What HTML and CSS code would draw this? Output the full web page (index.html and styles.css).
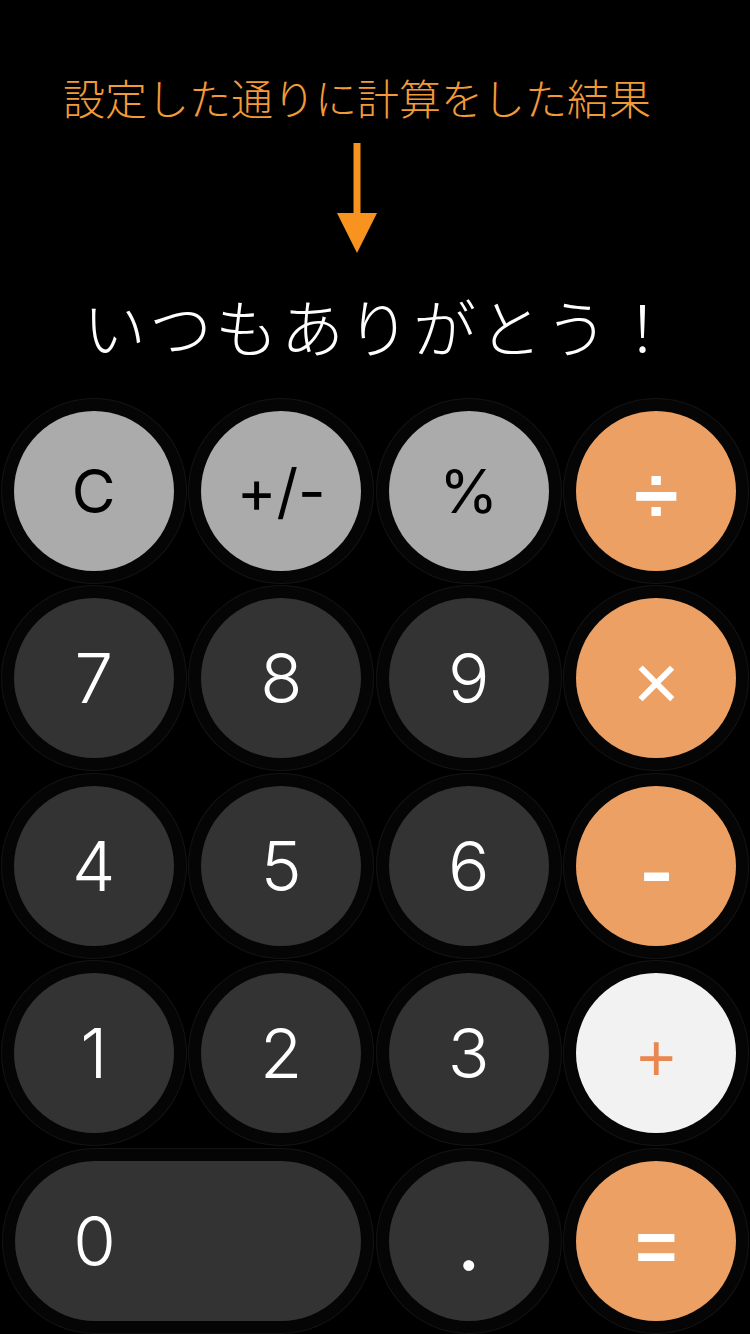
FILE: index.html
```html
<!DOCTYPE html>
<html lang="ja">
<head>
<meta charset="utf-8">
<title>Calculator</title>
<link rel="stylesheet" href="styles.css">
</head>
<body>
<div class="screen">
  <header class="annot">
    <p class="annot-text">設定した通りに計算をした結果</p>
    <svg class="arrow" width="40" height="110" viewBox="0 0 40 110">
      <rect x="16.5" y="0" width="7" height="72" fill="#f7931e"/>
      <polygon points="0,70 40,70 20,110" fill="#f7931e"/>
    </svg>
  </header>
  <div class="display">いつもありがとう！</div>
  <div class="keys">
    <div class="cell"><div class="btn fn">C</div></div>
    <div class="cell"><div class="btn fn">+/-</div></div>
    <div class="cell"><div class="btn fn">%</div></div>
    <div class="cell"><div class="btn op"><span class="sym div">÷</span></div></div>

    <div class="cell"><div class="btn num">7</div></div>
    <div class="cell"><div class="btn num">8</div></div>
    <div class="cell"><div class="btn num">9</div></div>
    <div class="cell"><div class="btn op"><span class="sym mul">×</span></div></div>

    <div class="cell"><div class="btn num">4</div></div>
    <div class="cell"><div class="btn num">5</div></div>
    <div class="cell"><div class="btn num">6</div></div>
    <div class="cell"><div class="btn op"><span class="sym sub">-</span></div></div>

    <div class="cell"><div class="btn num">1</div></div>
    <div class="cell"><div class="btn num">2</div></div>
    <div class="cell"><div class="btn num">3</div></div>
    <div class="cell"><div class="btn op active"><span class="sym add">+</span></div></div>

    <div class="cell wide"><div class="btn num zero"><span class="zero-label">0</span></div></div>
    <div class="cell"><div class="btn num"><span class="dot">.</span></div></div>
    <div class="cell"><div class="btn op"><span class="sym eq">=</span></div></div>
  </div>
</div>
</body>
</html>
```
FILE: styles.css
```css
html, body {
  margin: 0;
  padding: 0;
  background: #000;
}
body {
  width: 750px;
  height: 1334px;
  overflow: hidden;
  font-family: "Inter", "Noto Sans CJK JP", sans-serif;
}
.screen {
  display: flex;
  flex-direction: column;
}
.annot {
  width: 714px;
  display: flex;
  flex-direction: column;
  align-items: center;
  padding-top: 76px;
}
.annot-text {
  margin: 0;
  font-family: "Noto Sans CJK JP", sans-serif;
  font-weight: 300;
  font-size: 42px;
  line-height: 42px;
  color: #f39a38;
  white-space: nowrap;
}
.arrow {
  display: block;
  margin-top: 25px;
}
.display {
  margin-top: 29px;
  height: 84px;
  display: flex;
  align-items: center;
  justify-content: center;
  font-family: "Noto Sans CJK JP", sans-serif;
  font-weight: 300;
  font-size: 63px;
  letter-spacing: 3px;
  color: #fff;
  padding-left: 10px;
}
.keys {
  display: grid;
  grid-template-columns: repeat(4, 187.5px);
  grid-auto-rows: 187.5px;
  margin-top: 31px;
}
.cell {
  display: flex;
  align-items: center;
  justify-content: center;
}
.cell.wide {
  grid-column: span 2;
}
.btn {
  width: 160px;
  height: 160px;
  border-radius: 80px;
  display: flex;
  align-items: center;
  justify-content: center;
  font-family: "Inter", sans-serif;
  color: #fff;
  box-shadow: 0 0 0 12px #050505, 0 0 0 13px #141414;
}
.fn {
  background: #ababab;
  color: #000;
  font-size: 60px;
  font-weight: 400;
}
.num {
  background: #333333;
  font-size: 69px;
  font-weight: 300;
}
.op {
  background: #eca064;
  color: #fff;
}
.op.active {
  background: #f2f2f2;
  color: #e8874f;
}
.zero {
  width: 346px;
  justify-content: flex-start;
}
.zero-label {
  width: 160px;
  text-align: center;
}
.dot {
  position: relative;
  top: 4px;
  font-weight: 600;
}
.sym {
  font-family: "Liberation Sans", sans-serif;
  display: inline-block;
  position: relative;
  top: 5px;
}
.div {
  font-size: 80px;
  font-weight: 700;
}
.mul {
  font-size: 80px;
  font-weight: 400;
}
.sub {
  font-size: 70px;
  font-weight: 700;
  transform: scaleX(1.4);
}
.add {
  font-size: 66px;
  font-weight: 400;
}
.eq {
  font-size: 72px;
  font-weight: 700;
}
```
